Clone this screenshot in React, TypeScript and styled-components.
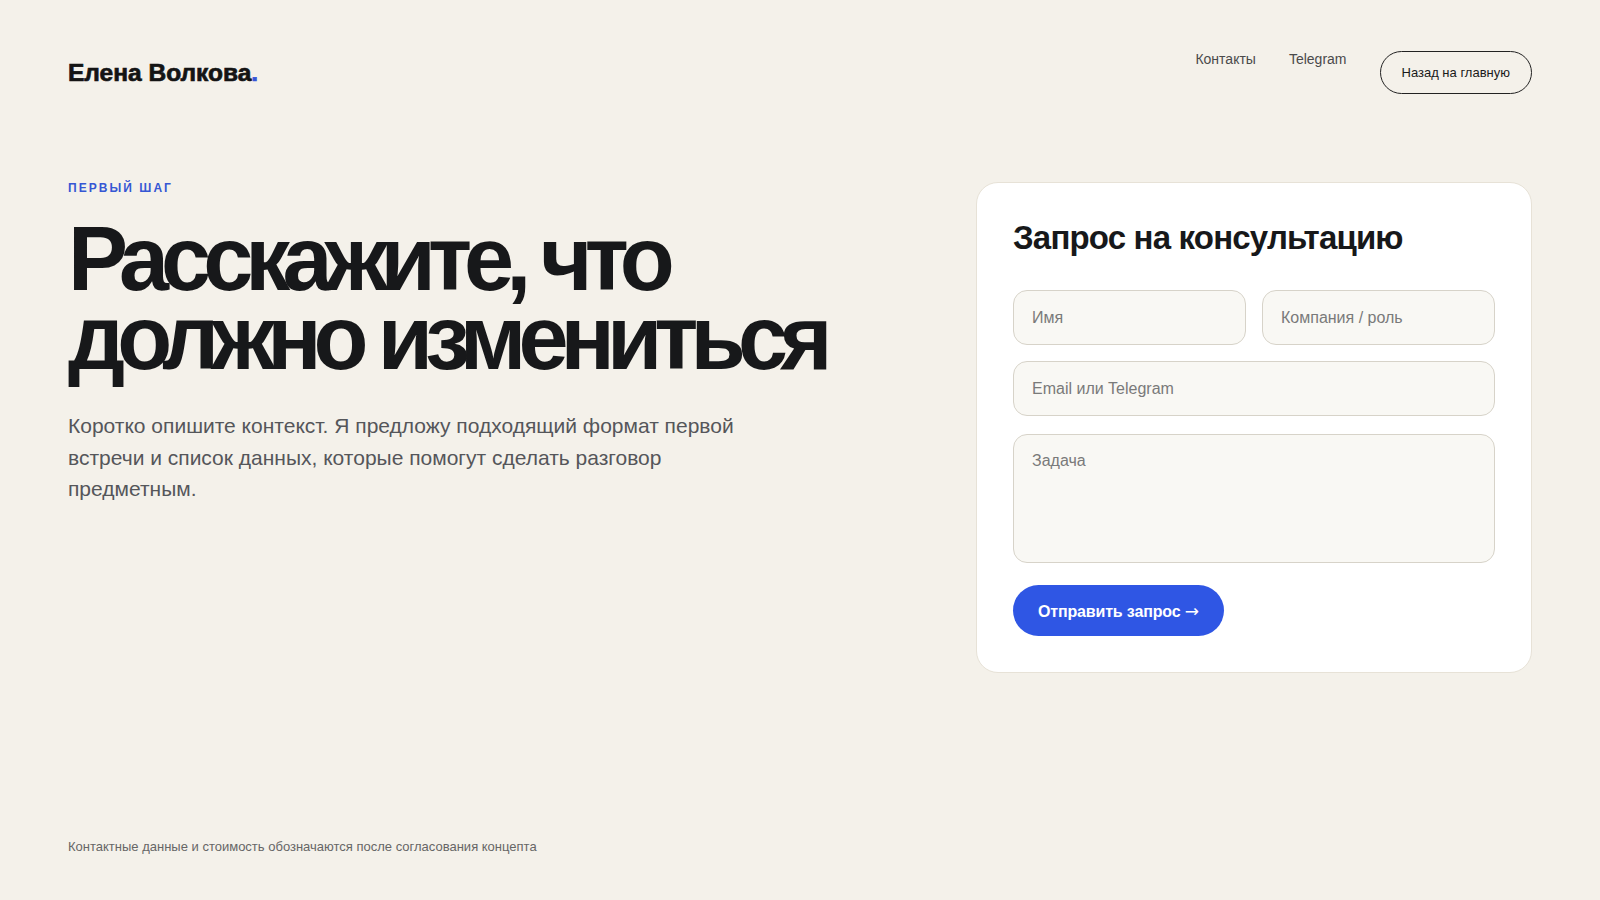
import React from 'react';
import styled, { createGlobalStyle } from 'styled-components';

const GlobalStyle = createGlobalStyle`
  * { box-sizing: border-box; }
  html, body { margin: 0; padding: 0; }
  body {
    background: #f4f1ea;
    color: #17181a;
    font-family: "Liberation Sans", Arial, sans-serif;
  }
`;

const Page = styled.div`
  min-height: 100vh;
  padding: 0 68px;
  display: flex;
  flex-direction: column;
`;

const Header = styled.header`
  display: flex;
  align-items: center;
  justify-content: space-between;
  padding-top: 51px;
`;

const Logo = styled.div`
  font-size: 24.5px;
  font-weight: 700;
  letter-spacing: 0;
  color: #141414;
  -webkit-text-stroke: 0.7px #141414;

  span {
    color: #3456d8;
    -webkit-text-stroke: 0.7px #3456d8;
  }
`;

const Nav = styled.nav`
  display: flex;
  align-items: flex-start;
  gap: 33px;
`;

const NavLink = styled.a`
  font-size: 14px;
  line-height: 16px;
  color: #4a4a4a;
  text-decoration: none;
`;

const OutlineButton = styled.a`
  display: inline-flex;
  align-items: center;
  height: 43px;
  padding: 0 21px;
  border: 1.5px solid #222;
  border-radius: 999px;
  font-size: 13px;
  color: #1a1a1a;
  text-decoration: none;
`;

const Main = styled.main`
  display: grid;
  grid-template-columns: 1fr 556px;
  gap: 40px;
  align-items: start;
  margin-top: 86px;
`;

const Intro = styled.section``;

const Eyebrow = styled.div`
  font-size: 12px;
  line-height: 16px;
  font-weight: 700;
  letter-spacing: 0.17em;
  color: #3657d4;
`;

const Title = styled.h1`
  margin: 24px 0 0;
  font-size: 90px;
  line-height: 79px;
  font-weight: 700;
  letter-spacing: -0.088em;
  color: #17181a;

  span {
    display: block;
  }
`;

const Lead = styled.p`
  margin: 32px 0 0;
  max-width: 700px;
  font-size: 21px;
  line-height: 31.6px;
  color: #55565a;
`;

const Card = styled.form`
  margin-top: 2px;
  background: #ffffff;
  border: 1px solid #e7e2d7;
  border-radius: 22px;
  padding: 36px;
  display: flex;
  flex-direction: column;
  gap: 16px;
`;

const CardTitle = styled.h2`
  margin: 0 0 18px;
  font-size: 33px;
  line-height: 37px;
  font-weight: 700;
  letter-spacing: -0.025em;
  color: #17181a;
`;

const Row = styled.div`
  display: grid;
  grid-template-columns: 1fr 1fr;
  gap: 16px;
`;

const fieldStyles = `
  width: 100%;
  border: 1px solid #d7d3c9;
  border-radius: 14px;
  background: #f9f8f4;
  font-family: "Liberation Sans", Arial, sans-serif;
  font-size: 16px;
  color: #222;
  padding: 0 18px;
  outline: none;

  &::placeholder {
    color: #7a7a7a;
  }
`;

const Input = styled.input`
  ${fieldStyles}
  height: 55px;
`;

const TextArea = styled.textarea`
  ${fieldStyles}
  height: 129px;
  padding-top: 17px;
  resize: none;
  margin-top: 2px;
`;

const Submit = styled.button`
  align-self: flex-start;
  margin-top: 6px;
  height: 51px;
  padding: 0 25px;
  border: none;
  border-radius: 999px;
  background: #2f56e4;
  color: #fff;
  font-family: "Liberation Sans", Arial, sans-serif;
  font-size: 16px;
  font-weight: 700;
  letter-spacing: -0.01em;
  cursor: pointer;
`;

const Arrow = styled.span`
  font-family: "DejaVu Sans", sans-serif;
  font-weight: 400;
  font-size: 17px;
`;

const Footer = styled.footer`
  margin-top: auto;
  padding-bottom: 46px;
  font-size: 13px;
  line-height: 14px;
  color: #666;
`;

export default function App() {
  return (
    <>
      <GlobalStyle />
      <Page>
        <Header>
          <Logo>
            Елена Волкова<span>.</span>
          </Logo>
          <Nav>
            <NavLink href="#">Контакты</NavLink>
            <NavLink href="#">Telegram</NavLink>
            <OutlineButton href="#">Назад на главную</OutlineButton>
          </Nav>
        </Header>

        <Main>
          <Intro>
            <Eyebrow>ПЕРВЫЙ ШАГ</Eyebrow>
            <Title>
              <span>Расскажите, что</span>
              <span>должно измениться</span>
            </Title>
            <Lead>
              Коротко опишите контекст. Я предложу подходящий формат первой встречи и список
              данных, которые помогут сделать разговор предметным.
            </Lead>
          </Intro>

          <Card onSubmit={(e) => e.preventDefault()}>
            <CardTitle>Запрос на консультацию</CardTitle>
            <Row>
              <Input placeholder="Имя" />
              <Input placeholder="Компания / роль" />
            </Row>
            <Input placeholder="Email или Telegram" />
            <TextArea placeholder="Задача" />
            <Submit type="submit">
              Отправить запрос <Arrow>→</Arrow>
            </Submit>
          </Card>
        </Main>

        <Footer>Контактные данные и стоимость обозначаются после согласования концепта</Footer>
      </Page>
    </>
  );
}
